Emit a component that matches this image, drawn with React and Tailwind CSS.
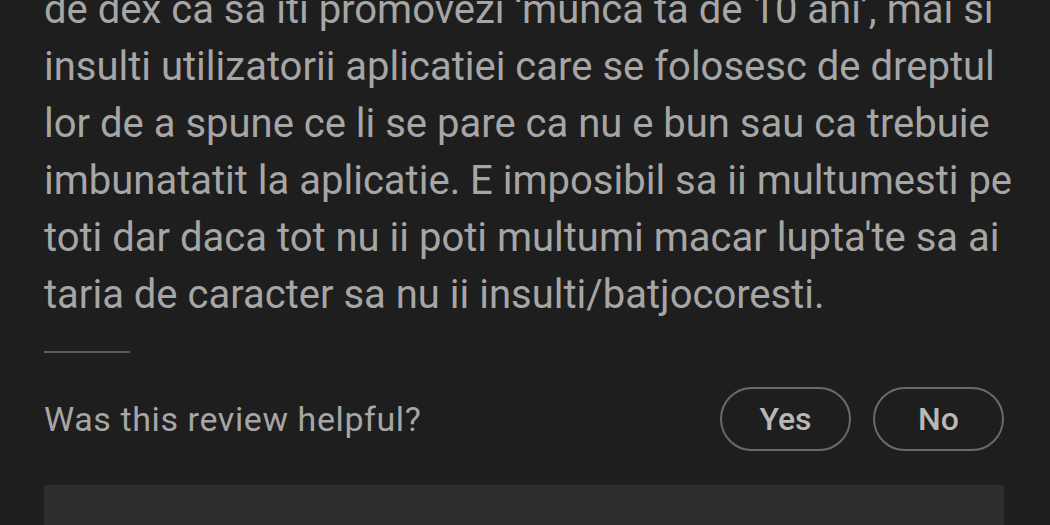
export default function App() {
  const lines = [
    "de dex ca sa iti promovezi \u2018munca ta de 10 ani\u2019, mai si",
    "insulti utilizatorii aplicatiei care se folosesc de dreptul",
    "lor de a spune ce li se pare ca nu e bun sau ca trebuie",
    "imbunatatit la aplicatie. E imposibil sa ii multumesti pe",
    "toti dar daca tot nu ii poti multumi macar lupta'te sa ai",
    "taria de caracter sa nu ii insulti/batjocoresti.",
  ];

  return (
    <div className="h-[525px] w-[1050px] overflow-hidden bg-[#1e1e1e] pl-[44px] pr-[46px] font-['Roboto',sans-serif]">
      {/* REVIEW BODY */}
      <div className="mt-[-19px] text-[40px] leading-[57px] text-[#a6a6a6]">
        {lines.map((line, i) => (
          <div key={i} className="whitespace-nowrap">
            {line}
          </div>
        ))}
      </div>

      <div className="mt-[28px] h-[2px] w-[86px] bg-[#5c5c5c]"></div>

      {/* HELPFUL ROW */}
      <div className="mt-[34px] flex h-[64px] items-center justify-between">
        <span className="text-[34px] tracking-[0.6px] text-[#a6a6a6]">Was this review helpful?</span>
        <div className="flex gap-[22px]">
          <button className="h-[64px] w-[131px] rounded-full border-2 border-[#6a6a6a] text-[32px] font-medium text-[#b8b8b8]">
            Yes
          </button>
          <button className="h-[64px] w-[131px] rounded-full border-2 border-[#6a6a6a] text-[32px] font-medium text-[#b8b8b8]">
            No
          </button>
        </div>
      </div>

      {/* NEXT CARD */}
      <div className="mt-[34px] h-[200px] bg-[#2e2e2e]"></div>
    </div>
  );
}
